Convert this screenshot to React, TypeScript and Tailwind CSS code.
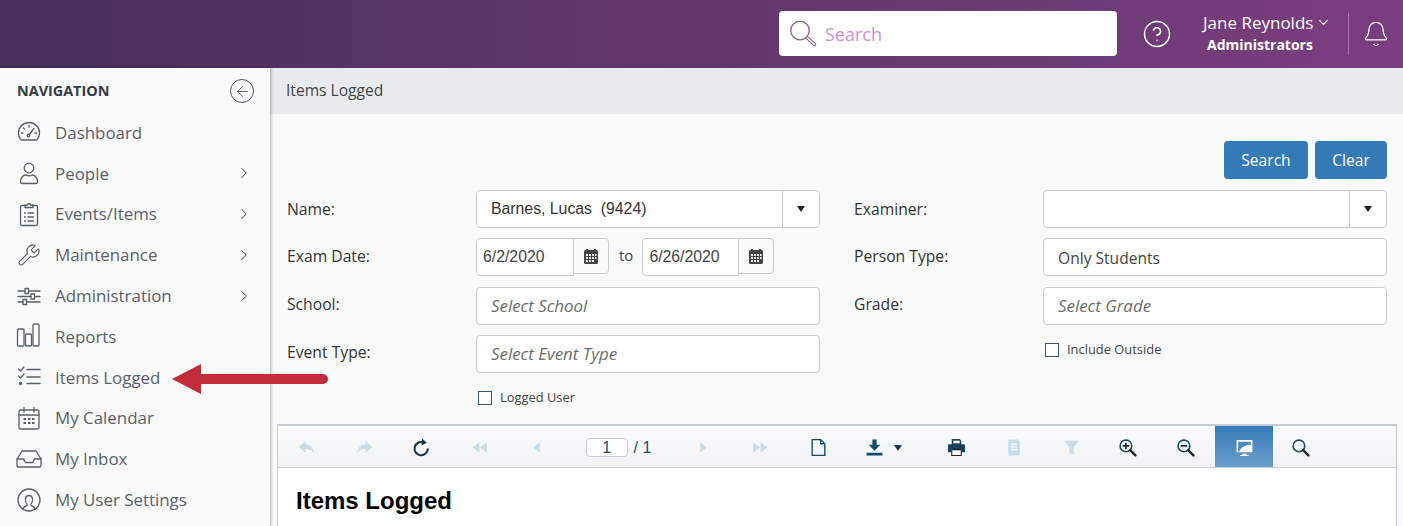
import { ChevronDown, ChevronRight, HelpCircle, Bell, ArrowLeft, Wrench } from "lucide-react";
import type { ReactNode } from "react";

const NAV_STROKE = "#55606c";

function Ic({ children, size = 26 }: { children: ReactNode; size?: number }) {
  return (
    <svg width={size} height={size} viewBox="0 0 26 26" fill="none" stroke={NAV_STROKE} strokeWidth="1.3" strokeLinecap="round" strokeLinejoin="round">
      {children}
    </svg>
  );
}

const navItems: { label: string; icon: ReactNode; more?: boolean }[] = [
  {
    label: "Dashboard",
    icon: (
      <Ic>
        <path d="M6 21.500c-2-1.500-3-4-3-7a10.500 10.500 0 0 1 21 0c0 3-1 5.500-3 7Z" transform="translate(-.5 -.5)" />
        <path d="m13 16 5-6.500M5.500 14h1.500M19 14h1.500M13 6.500V8M7.500 9l1 1" />
        <circle cx="12.500" cy="16.500" r="1.300" />
      </Ic>
    ),
  },
  {
    label: "People",
    more: true,
    icon: (
      <Ic>
        <circle cx="13" cy="8" r="4.800" />
        <path d="M6.500 23.500c-1.300 0-2-.8-2-2 0-4 3-6.500 5-6.500 2 1 5 1 7 0 2 0 5 2.500 5 6.500 0 1.200-.7 2-2 2Z" />
      </Ic>
    ),
  },
  {
    label: "Events/Items",
    more: true,
    icon: (
      <Ic>
        <path d="M9 4.500H6a1.500 1.500 0 0 0-1.500 1.500v17A1.500 1.500 0 0 0 6 24.500h14a1.500 1.500 0 0 0 1.500-1.500V6A1.500 1.500 0 0 0 20 4.500h-3" />
        <path d="M9 6.500V4h2.500a1.500 1.500 0 0 1 3 0H17v2.500Z" />
        <path d="M8.500 12h1M12 12h5.500M8.500 16h1M12 16h5.500M8.500 20h1M12 20h5.500" />
      </Ic>
    ),
  },
  { label: "Maintenance", more: true, icon: <Wrench size={24} strokeWidth={1.2} color={NAV_STROKE} className="-scale-x-100 rotate-90" /> },
  {
    label: "Administration",
    more: true,
    icon: (
      <Ic>
        <path d="M2 8h7M13 8h11M2 13.500h13M19 13.500h5M2 19h5M11 19h13" />
        <rect x="9" y="5.500" width="3.500" height="5" />
        <rect x="15" y="11" width="3.500" height="5" />
        <rect x="7" y="16.500" width="3.500" height="5" />
      </Ic>
    ),
  },
  {
    label: "Reports",
    icon: (
      <Ic>
        <rect x="1.500" y="6" width="6.500" height="17" rx="1" />
        <rect x="9.500" y="11" width="6" height="12" rx="1" />
        <rect x="17" y="1" width="6" height="22" rx="1" />
      </Ic>
    ),
  },
  {
    label: "Items Logged",
    icon: (
      <Ic>
        <path d="m2.500 5 2 2L8 3M2.500 12l2 2L8 10" />
        <path d="M11 5.500h13M11 13h13M11 19.500h13" strokeWidth="1.500" />
        <circle cx="4.500" cy="19.500" r="1" fill={NAV_STROKE} />
      </Ic>
    ),
  },
  {
    label: "My Calendar",
    icon: (
      <Ic>
        <rect x="3" y="5" width="20" height="19" rx="1.500" />
        <path d="M3 10h20M8 2.500V7M18 2.500V7" />
        <path d="M7.500 14h2.500M12 14h2.500M16 14h2.500M7.500 18h2.500M12 18h2.500M16 18h2.500" strokeWidth="2.200" strokeLinecap="butt" />
      </Ic>
    ),
  },
  {
    label: "My Inbox",
    icon: (
      <Ic>
        <path d="M1 13 6 5h14l5 8v6.500a1.500 1.500 0 0 1-1.500 1.500h-21A1.500 1.500 0 0 1 1 19.500Z" />
        <path d="M1 13h7c0 2 1 3.500 2.500 3.500h5c1.500 0 2.500-1.500 2.500-3.500h7" />
      </Ic>
    ),
  },
  {
    label: "My User Settings",
    icon: (
      <Ic>
        <circle cx="13" cy="13" r="11" />
        <path d="M7 22c0-2.500 3-3 4-3.500 .5-1-.2-1.500-1-3-1-2-1-7 3-7s4 5 3 7c-.8 1.500-1.500 2-1 3 1 .5 4 1 4 3.500" />
      </Ic>
    ),
  },
];

function CalendarGlyph() {
  return (
    <svg width="16" height="17" viewBox="0 0 16 17" fill="#444">
      <path d="M1 3.500a1.500 1.500 0 0 1 1.500-1.500H3V1h2v1h6V1h2v1h.5A1.500 1.500 0 0 1 15 3.500v11a1.500 1.500 0 0 1-1.500 1.500h-11A1.500 1.500 0 0 1 1 14.500Z" />
      <path fill="#f4f4f4" d="M3 6h2v2H3zM6 6h2v2H6zM9 6h2v2H9zM12 6h1.500v2H12zM3 9h2v2H3zM6 9h2v2H6zM9 9h2v2H9zM12 9h1.500v2H12zM3 12h2v2H3zM6 12h2v2H6zM9 12h2v2H9z" />
    </svg>
  );
}

function Label({ children, low }: { children: ReactNode; low?: boolean }) {
  return <div className={`w-[189px] shrink-0 text-[15.700px] text-[#333] ${low ? "pt-[2px]" : "pb-[2px]"}`}>{children}</div>;
}

function ComboBox({ value }: { value?: string }) {
  return (
    <div className="flex h-[38px] w-[344px] items-center rounded border border-[#ccc] bg-white">
      <div className="flex-1 whitespace-pre pl-3.5 font-['Liberation_Sans',sans-serif] text-[15.800px] text-[#333]">{value}</div>
      <div className="flex h-full w-[37px] items-center justify-center border-l border-[#ccc]">
        <span className="h-0 w-0 border-x-[4.500px] border-t-[6px] border-x-transparent border-t-[#222]" />
      </div>
    </div>
  );
}

function TextBox({ value, placeholder }: { value?: string; placeholder?: string }) {
  return (
    <div className="flex h-[38px] w-[344px] items-center rounded border border-[#ccc] bg-white pl-3.5">
      {value ? <span className="pt-[2px] text-[15.600px] text-[#444]">{value}</span> : <span className="text-[16.900px] italic text-[#6d6d6d]">{placeholder}</span>}
    </div>
  );
}

function DateBox({ value, width }: { value: string; width: string }) {
  return (
    <div className="flex items-start">
      <div className={`flex h-[38px] items-center rounded-l border border-[#ccc] bg-white pl-1.5 font-['Liberation_Sans',sans-serif] text-[15.800px] text-[#444] ${width}`}>
        {value}
      </div>
      <div className="-ml-px flex h-[36px] w-[36px] items-center justify-center rounded-r border border-[#ccc] bg-[#fafafa]">
        <CalendarGlyph />
      </div>
    </div>
  );
}

function Check({ label }: { label: string }) {
  return (
    <label className="flex items-center gap-[8px] text-[12.900px] text-[#444]">
      <span className="h-[14px] w-[14px] border border-[#33587f] bg-white" />
      {label}
    </label>
  );
}

const ACTIVE = "#0f4c6e";
const DISABLED = "#c5deee";

function Cell({ children, w = "w-[57.500px]", active }: { children: ReactNode; w?: string; active?: boolean }) {
  return (
    <div className={`flex h-full shrink-0 items-center justify-center pt-[3px] ${w} ${active ? "bg-gradient-to-b from-[#337ab7] to-[#6a9fcb]" : ""}`}>
      {children}
    </div>
  );
}

function Tb({ children }: { children: ReactNode }) {
  return (
    <svg width="19" height="19" viewBox="0 0 18 18">
      {children}
    </svg>
  );
}

function Magnifier({ inner }: { inner?: ReactNode }) {
  return (
    <Tb>
      <circle cx="7.500" cy="7.500" r="5.500" fill="none" stroke={ACTIVE} strokeWidth="1.500" />
      <path d="m11.500 11.500 5 5" stroke="#222" strokeWidth="2.200" strokeLinecap="round" />
      {inner}
    </Tb>
  );
}

function Toolbar() {
  return (
    <div className="flex h-[42px] shrink-0 items-center border-b border-[#c4cdd5] bg-gradient-to-b from-[#fafbfc] to-[#f1f3f5]">
      <Cell>
        <Tb><path fill={DISABLED} d="M8 3 1.500 8.500 8 14v-3.500c4 0 6 1 8 4-.5-5-3-8-8-8.500Z" /></Tb>
      </Cell>
      <Cell>
        <Tb><path fill={DISABLED} d="m10 3 6.500 5.500L10 14v-3.500c-4 0-6 1-8 4 .5-5 3-8 8-8.500Z" /></Tb>
      </Cell>
      <Cell>
        <Tb>
          <path d="M11 4.200A6.300 6.300 0 1 0 15 10" fill="none" stroke="#17384d" strokeWidth="2" />
          <path d="M9.500 .5 14 4.500l-5 2.500Z" fill="#17384d" />
        </Tb>
      </Cell>
      <Cell>
        <Tb><path fill={DISABLED} d="M9 4v10L2.500 9ZM16 4v10L9.500 9Z" /></Tb>
      </Cell>
      <Cell>
        <Tb><path fill={DISABLED} d="M12 4v10L6 9Z" /></Tb>
      </Cell>
      <Cell w="w-[109px]">
        <div className="flex items-center gap-[6px] pr-[3px] font-['Liberation_Sans',sans-serif] text-[16px] text-[#1d4e6b]">
          <span className="flex h-[19px] w-[42px] items-center justify-center rounded border border-[#c4cdd5] bg-white">1</span>
          <span>/ 1</span>
        </div>
      </Cell>
      <Cell>
        <Tb><path fill={DISABLED} d="M6 4v10l6-5Z" /></Tb>
      </Cell>
      <Cell>
        <Tb><path fill={DISABLED} d="M2 4v10l6.500-5ZM9 4v10l6.500-5Z" /></Tb>
      </Cell>
      <Cell>
        <Tb><path d="M3 1.500h8l4 4v11H3Z M11 1.500v4h4" fill="none" stroke={ACTIVE} strokeWidth="1.300" /></Tb>
      </Cell>
      <Cell w="w-[80.500px]">
        <div className="flex items-center gap-[10px] pr-[7px]">
          <Tb>
            <path fill={ACTIVE} d="M7 1.500h4v5h3.500L9 12 3.500 6.500H7ZM1.500 14h15v2.500h-15Z" />
          </Tb>
          <span className="h-0 w-0 border-x-[4.500px] border-t-[6.500px] border-x-transparent border-t-[#0f3d59]" />
        </div>
      </Cell>
      <Cell>
        <Tb>
          <path fill="#14425e" d="M4.500 1h7.500l1.500 1.500V6h-9ZM1 7a1 1 0 0 1 1-1h14a1 1 0 0 1 1 1v6.500h-3V10.500H4v3H1Z" />
          <path fill="#fff" stroke="#222" strokeWidth="1" d="M4.500 11h9v5.500h-9Z" />
          <path fill="#fff" d="M6 2.500h6V5H6Z" />
        </Tb>
      </Cell>
      <Cell>
        <Tb>
          <path fill={DISABLED} d="M4 1.500h9l2 2v13H4Z" />
          <path stroke="#fff" strokeWidth="1" d="M6.500 6h6M6.500 8.500h6M6.500 11h6" />
        </Tb>
      </Cell>
      <Cell>
        <Tb><path fill={DISABLED} d="M2 2.500h14L11 9v7l-4-2V9Z" /></Tb>
      </Cell>
      <Cell w="w-[57.500px] pr-[3px]">
        <Magnifier inner={<path d="M4.500 7.500h6M7.500 4.500v6" stroke="#222" strokeWidth="1.600" />} />
      </Cell>
      <Cell w="w-[57.500px] pr-[2px]">
        <Magnifier inner={<path d="M4.500 7.500h6" stroke="#222" strokeWidth="1.600" />} />
      </Cell>
      <Cell w="w-[58px]" active>
        <Tb>
          <path fill="#fff" d="M1.500 2h15v11.500h-15ZM7 15h4v1h2v1H5v-1h2Z" />
          <path fill="#4d89bd" d="M3 3.500h12v3c-5 0-9 2-11 6.500H3Z" />
        </Tb>
      </Cell>
      <Cell w="w-[57.500px] pr-[3px]">
        <Magnifier />
      </Cell>
    </div>
  );
}

export default function App() {
  return (
    <div className="relative flex h-[526px] w-[1403px] flex-col overflow-hidden bg-white font-['Open_Sans',sans-serif]">
      <header className="flex h-[68px] shrink-0 items-center justify-end bg-gradient-to-r from-[#472f5c] to-[#7b3e80] text-white">
        <div className="mb-px flex h-[45px] w-[338px] items-center gap-[7px] rounded bg-white pl-[11px]">
          <svg width="28" height="28" viewBox="0 0 28 28" fill="none" stroke="#8c5f96">
            <circle cx="10" cy="10.500" r="9.300" strokeWidth="1.300" />
            <path d="m17.500 18 7 6.500" strokeWidth="3.500" strokeLinecap="round" />
            <path d="m17.500 18 7 6.500" strokeWidth="1.500" stroke="#fff" strokeLinecap="round" />
          </svg>
          <span className="pt-px text-[18px] text-[#cf8fdb]">Search</span>
        </div>
        <HelpCircle size={30} strokeWidth={1.200} className="ml-[25px]" />
        <div className="ml-[28px] flex w-[141px] flex-col items-start pb-[2px] pl-[3px] leading-none">
          <div className="flex items-center gap-[3px] text-[17px]">
            Jane Reynolds <ChevronDown size={15} strokeWidth={2} />
          </div>
          <div className="mt-[7px] pl-[4px] text-[14px] font-bold">Administrators</div>
        </div>
        <div className="ml-[7px] flex h-[42px] w-[55px] items-center justify-center border-l border-[#a377a8]">
          <Bell size={28} strokeWidth={1.100} />
        </div>
      </header>

      <div className="flex min-h-0 flex-1">
        <aside className="z-10 w-[270px] shrink-0 bg-[#fafafa] shadow-[1px_0_3px_rgba(0,0,0,0.3)]">
          <div className="flex h-[46px] items-center justify-between pr-[16px] pl-[17px]">
            <span className="text-[14.400px] font-bold text-[#333b44]">NAVIGATION</span>
            <span className="flex h-[24px] w-[24px] items-center justify-center rounded-full border border-[#4c5661]">
              <ArrowLeft size={17} strokeWidth={1} color="#333" />
            </span>
          </div>
          <nav className="-mt-[2px] flex flex-col">
            {navItems.map((item) => (
              <div key={item.label} className="flex h-[40.800px] items-center pr-[17px] pl-[16px] text-[16.900px] text-[#58616b]">
                <span className="flex w-[26px] justify-center">{item.icon}</span>
                <span className="ml-[13px] flex-1">{item.label}</span>
                {item.more && <ChevronRight size={18} strokeWidth={1.400} color="#555" />}
              </div>
            ))}
          </nav>
        </aside>

        <main className="flex min-w-0 flex-1 flex-col bg-[#f9fbfb]">
          <div className="flex h-[46px] shrink-0 items-center bg-[#e9ecef] pl-[16px] text-[15.600px] text-[#444]">Items Logged</div>

          <div className="flex justify-end gap-[7px] pt-[27px] pr-[16px]">
            <button className="h-[38px] w-[84px] rounded-sm bg-[#337ab7] pt-px text-[15.600px] text-white">Search</button>
            <button className="h-[38px] w-[72px] rounded-sm bg-[#337ab7] pt-px text-[15.600px] text-white">Clear</button>
          </div>

          <div className="flex gap-[34px] pt-[11px] pl-[17px]">
            <div className="flex flex-col gap-[10.300px]">
              <div className="flex items-center"><Label low>Name:</Label><ComboBox value="Barnes, Lucas  (9424)" /></div>
              <div className="flex items-center">
                <Label>Exam Date:</Label>
                <DateBox value="6/2/2020" width="w-[98px]" />
                <span className="mr-[9px] ml-[10px] pb-1 text-[15px] text-[#444]">to</span>
                <DateBox value="6/26/2020" width="w-[97px]" />
              </div>
              <div className="flex items-center"><Label>School:</Label><TextBox placeholder="Select School" /></div>
              <div className="flex items-center"><Label>Event Type:</Label><TextBox placeholder="Select Event Type" /></div>
              <div className="pt-[5px] pl-[191px]"><Check label="Logged User" /></div>
            </div>
            <div className="flex flex-col gap-[10.300px]">
              <div className="flex items-center"><Label low>Examiner:</Label><ComboBox /></div>
              <div className="flex items-center"><Label>Person Type:</Label><TextBox value="Only Students" /></div>
              <div className="flex items-center"><Label>Grade:</Label><TextBox placeholder="Select Grade" /></div>
              <div className="pt-[5px] pl-[191px]"><Check label="Include Outside" /></div>
            </div>
          </div>

          <section className="mt-[16px] mr-[6px] ml-[7px] flex min-h-0 flex-1 flex-col border-x border-t-2 border-[#c4cdd5] bg-white">
            <Toolbar />
            <h1 className="pt-[15px] pl-[18px] font-['Liberation_Sans',sans-serif] text-[24px] font-bold text-black">Items Logged</h1>
          </section>
        </main>
      </div>

      {/* annotation arrow over the nav and form */}
      <svg className="absolute top-[363px] left-[171px] z-20" width="160" height="32" viewBox="0 0 160 32">
        <path d="M1 16 30 1v10h122a5 5 0 0 1 0 10H30v10Z" fill="#c12d3b" />
      </svg>
    </div>
  );
}
